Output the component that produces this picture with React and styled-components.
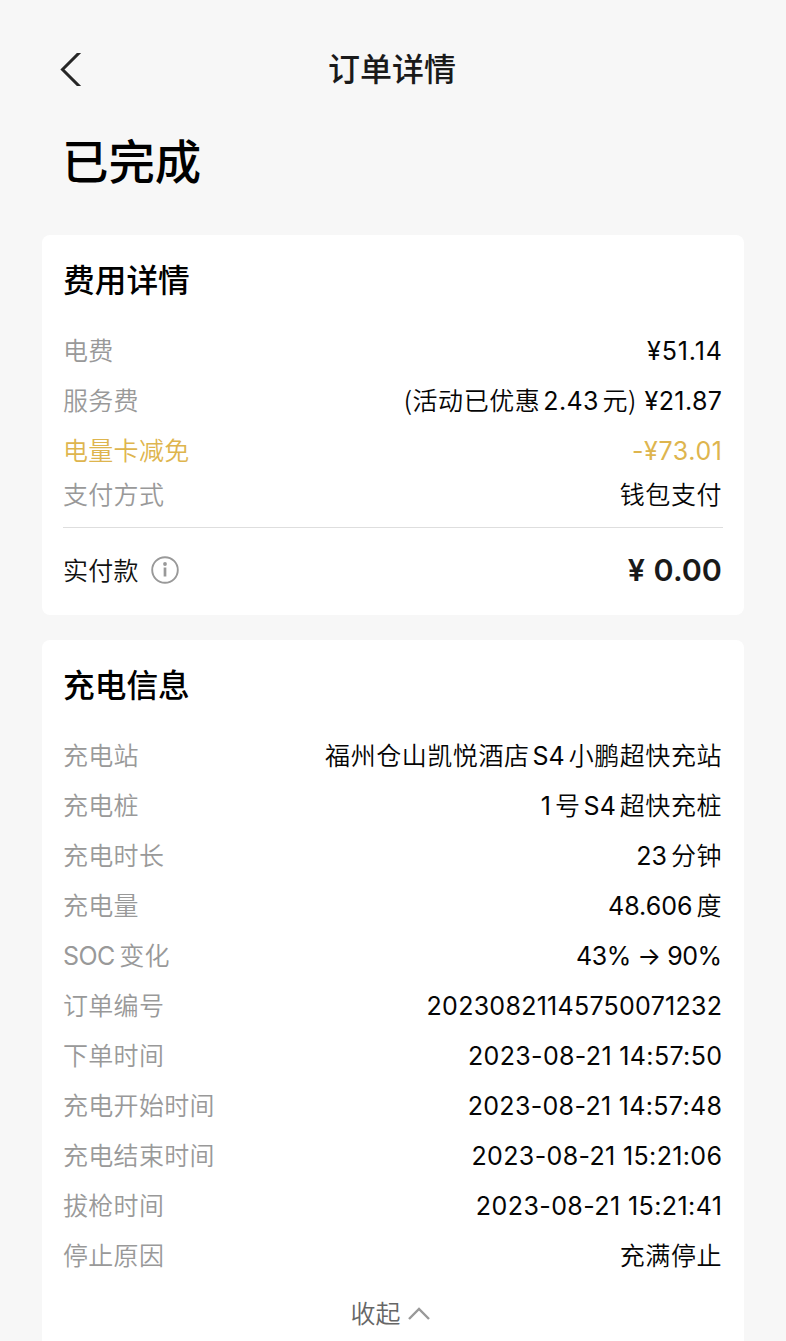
import React, { useState } from 'react'
import styled, { createGlobalStyle } from 'styled-components'

const GlobalStyle = createGlobalStyle`
    * {
        box-sizing: border-box;
    }
    body {
        margin: 0;
        background: #f7f7f7;
        font-family: Inter, 'Noto Sans CJK SC', sans-serif;
        color: #050505;
        overflow: hidden;
    }
`;

const Page = styled.div`
    height: 1341px;
    padding: 0 42px;
    overflow: hidden;
`;

// Top bar
const NavBar = styled.header`
    height: 118px;
    padding: 21px 19px 0 17px;
    display: grid;
    grid-template-columns: 24px 1fr 24px;
    align-items: center;
`;
const BackButton = styled.button`
    padding: 0;
    border: 0;
    background: transparent;
    line-height: 0;
    cursor: pointer;
`;
const NavTitle = styled.h1`
    margin: 0;
    padding-bottom: 6px;
    text-align: center;
    font: 500 32px/46px 'Noto Sans CJK SC', sans-serif;
    color: #1a1a1a;
`;
const Status = styled.h2`
    margin: 0;
    height: 117px;
    padding: 6px 0 0 20px;
    font: 500 46.4px/70px 'Noto Sans CJK SC', sans-serif;
    color: #000;
`;

// Cards
const Card = styled.section`
    height: ${({ $height }) => $height}px;
    margin-bottom: 25px;
    padding: 18px 22px 0 21px;
    border-radius: 8px;
    background: #fff;
`;
const CardTitle = styled.h3`
    margin: 0 0 23px;
    font: 500 31.7px/50px 'Noto Sans CJK SC', sans-serif;
    color: #000;
`;
const Row = styled.div`
    height: ${({ $height }) => $height || 50}px;
    display: flex;
    align-items: center;
    justify-content: space-between;
    white-space: pre;
    font-size: 25px;
    color: ${({ $gold }) => ($gold ? '#deb54e' : 'inherit')};
`;
const Label = styled.span`
    display: flex;
    align-items: center;
    letter-spacing: 0.3px;
    color: ${({ $color }) => $color || '#999'};
`;
const Value = styled.span`
    display: flex;
    align-items: center;
    letter-spacing: 0.55px;
`;
const Han = styled.span`
    padding-bottom: ${({ $drop }) => ($drop ? 2 : 4)}px;
    font-family: 'Noto Sans CJK SC', sans-serif;
    font-weight: 350;
    line-height: 36px;
    word-spacing: -1.5px;
`;
const Latin = styled.span`
    line-height: 36px;
    letter-spacing: ${({ $track }) => $track || 0}px;
    margin-right: ${({ $track }) => -($track || 0)}px;

    ${Han} + & {
        margin-left: 3px;
    }
    & + ${Han} {
        margin-left: 4px;
    }
`;
const Divider = styled.hr`
    width: 660px;
    height: 1px;
    margin: 13px 0 0;
    border: 0;
    background: #dedede;
`;
const InfoIcon = styled.svg`
    margin-left: 12px;
`;
const Total = styled.span`
    font-weight: 600;
    font-size: 30.5px;
    line-height: 40px;
    word-spacing: 1px;
    color: #1a1a1a;
`;
const Collapse = styled.button`
    width: 100%;
    height: 60px;
    padding: 4px 5px 0 0;
    border: 0;
    background: transparent;
    display: flex;
    align-items: center;
    justify-content: center;
    gap: 7px;
    font: 350 25px/36px 'Noto Sans CJK SC', sans-serif;
    color: #666;
    cursor: pointer;
`;
const CollapseText = styled.span`
    padding-bottom: 3px;
`;

// Chinese and latin runs use different fonts, with a small gap between them
const MixedText = ({ text, track }) => {
    const runs = text.match(/[\u2E80-\u9FFF()]+ ?|[^\u2E80-\u9FFF()]+/g);
    return runs.map((run, i) =>
        /[\u2E80-\u9FFF()]/.test(run)
            ? <Han key={i}>{run}</Han>
            : <Latin key={i} $track={track}>{run}</Latin>
    );
};

const fees = [
    { label: '电费', value: '¥51.14', track: 0.9 },
    { label: '服务费', value: '(活动已优惠2.43元) ¥21.87', track: 0.4 },
    { label: '电量卡减免', value: '-¥73.01', gold: true, track: 0.6 },
    { label: '支付方式', value: '钱包支付', height: 38 },
];

const charging = [
    { label: '充电站', value: '福州仓山凯悦酒店S4小鹏超快充站' },
    { label: '充电桩', value: '1号S4超快充桩' },
    { label: '充电时长', value: '23分钟' },
    { label: '充电量', value: '48.606度' },
    { label: 'SOC变化', value: '43% → 90%', track: -0.5 },
    { label: '订单编号', value: '20230821145750071232', track: 0.27 },
    { label: '下单时间', value: '2023-08-21 14:57:50', track: 0.35 },
    { label: '充电开始时间', value: '2023-08-21 14:57:48', track: 0.33 },
    { label: '充电结束时间', value: '2023-08-21 15:21:06', track: 0.36 },
    { label: '拔枪时间', value: '2023-08-21 15:21:41', track: 0.42 },
    { label: '停止原因', value: '充满停止' },
];

const InfoRow = ({ label, value, gold, height, track }) => (
    <Row $gold={gold} $height={height}>
        <Label $color={gold && 'inherit'}><MixedText text={label} track={-0.6} /></Label>
        <Value><MixedText text={value} track={track} /></Value>
    </Row>
);

const App = () => {
    const [open, setOpen] = useState(true);

    return (
        <Page>
            <GlobalStyle />
            <NavBar>
                <BackButton aria-label="返回">
                    <svg width="24" height="33" viewBox="0 0 24 33" fill="none">
                        <path d="M22 -2L3.5 16.5L22 35" stroke="#262626" strokeWidth="3" />
                    </svg>
                </BackButton>
                <NavTitle>订单详情</NavTitle>
            </NavBar>
            <Status>已完成</Status>

            <Card $height={380}>
                <CardTitle>费用详情</CardTitle>
                {fees.map((item) => <InfoRow key={item.label} {...item} />)}
                <Divider />
                <Row $height={84}>
                    <Label $color="#111">
                        <Han $drop>实付款</Han>
                        <InfoIcon width="28" height="28" viewBox="0 0 28 28" fill="none">
                            <circle cx="14" cy="14" r="12.8" stroke="#999" strokeWidth="1.9" />
                            <circle cx="14" cy="8" r="1.9" fill="#999" />
                            <path d="M14 11.5V20.5" stroke="#999" strokeWidth="2.7" />
                        </InfoIcon>
                    </Label>
                    <Total>¥ 0.00</Total>
                </Row>
            </Card>

            <Card $height={720}>
                <CardTitle>充电信息</CardTitle>
                {open && charging.map((item) => <InfoRow key={item.label} {...item} />)}
                <Collapse onClick={() => setOpen(!open)}>
                    <CollapseText>{open ? '收起' : '展开'}</CollapseText>
                    <svg width="22" height="15" viewBox="0 0 22 15" fill="none">
                        <path d={open ? 'M1 13L11 3L21 13' : 'M1 3L11 13L21 3'} stroke="#999" strokeWidth="2.4" />
                    </svg>
                </Collapse>
            </Card>
        </Page>
    );
};

export default App
